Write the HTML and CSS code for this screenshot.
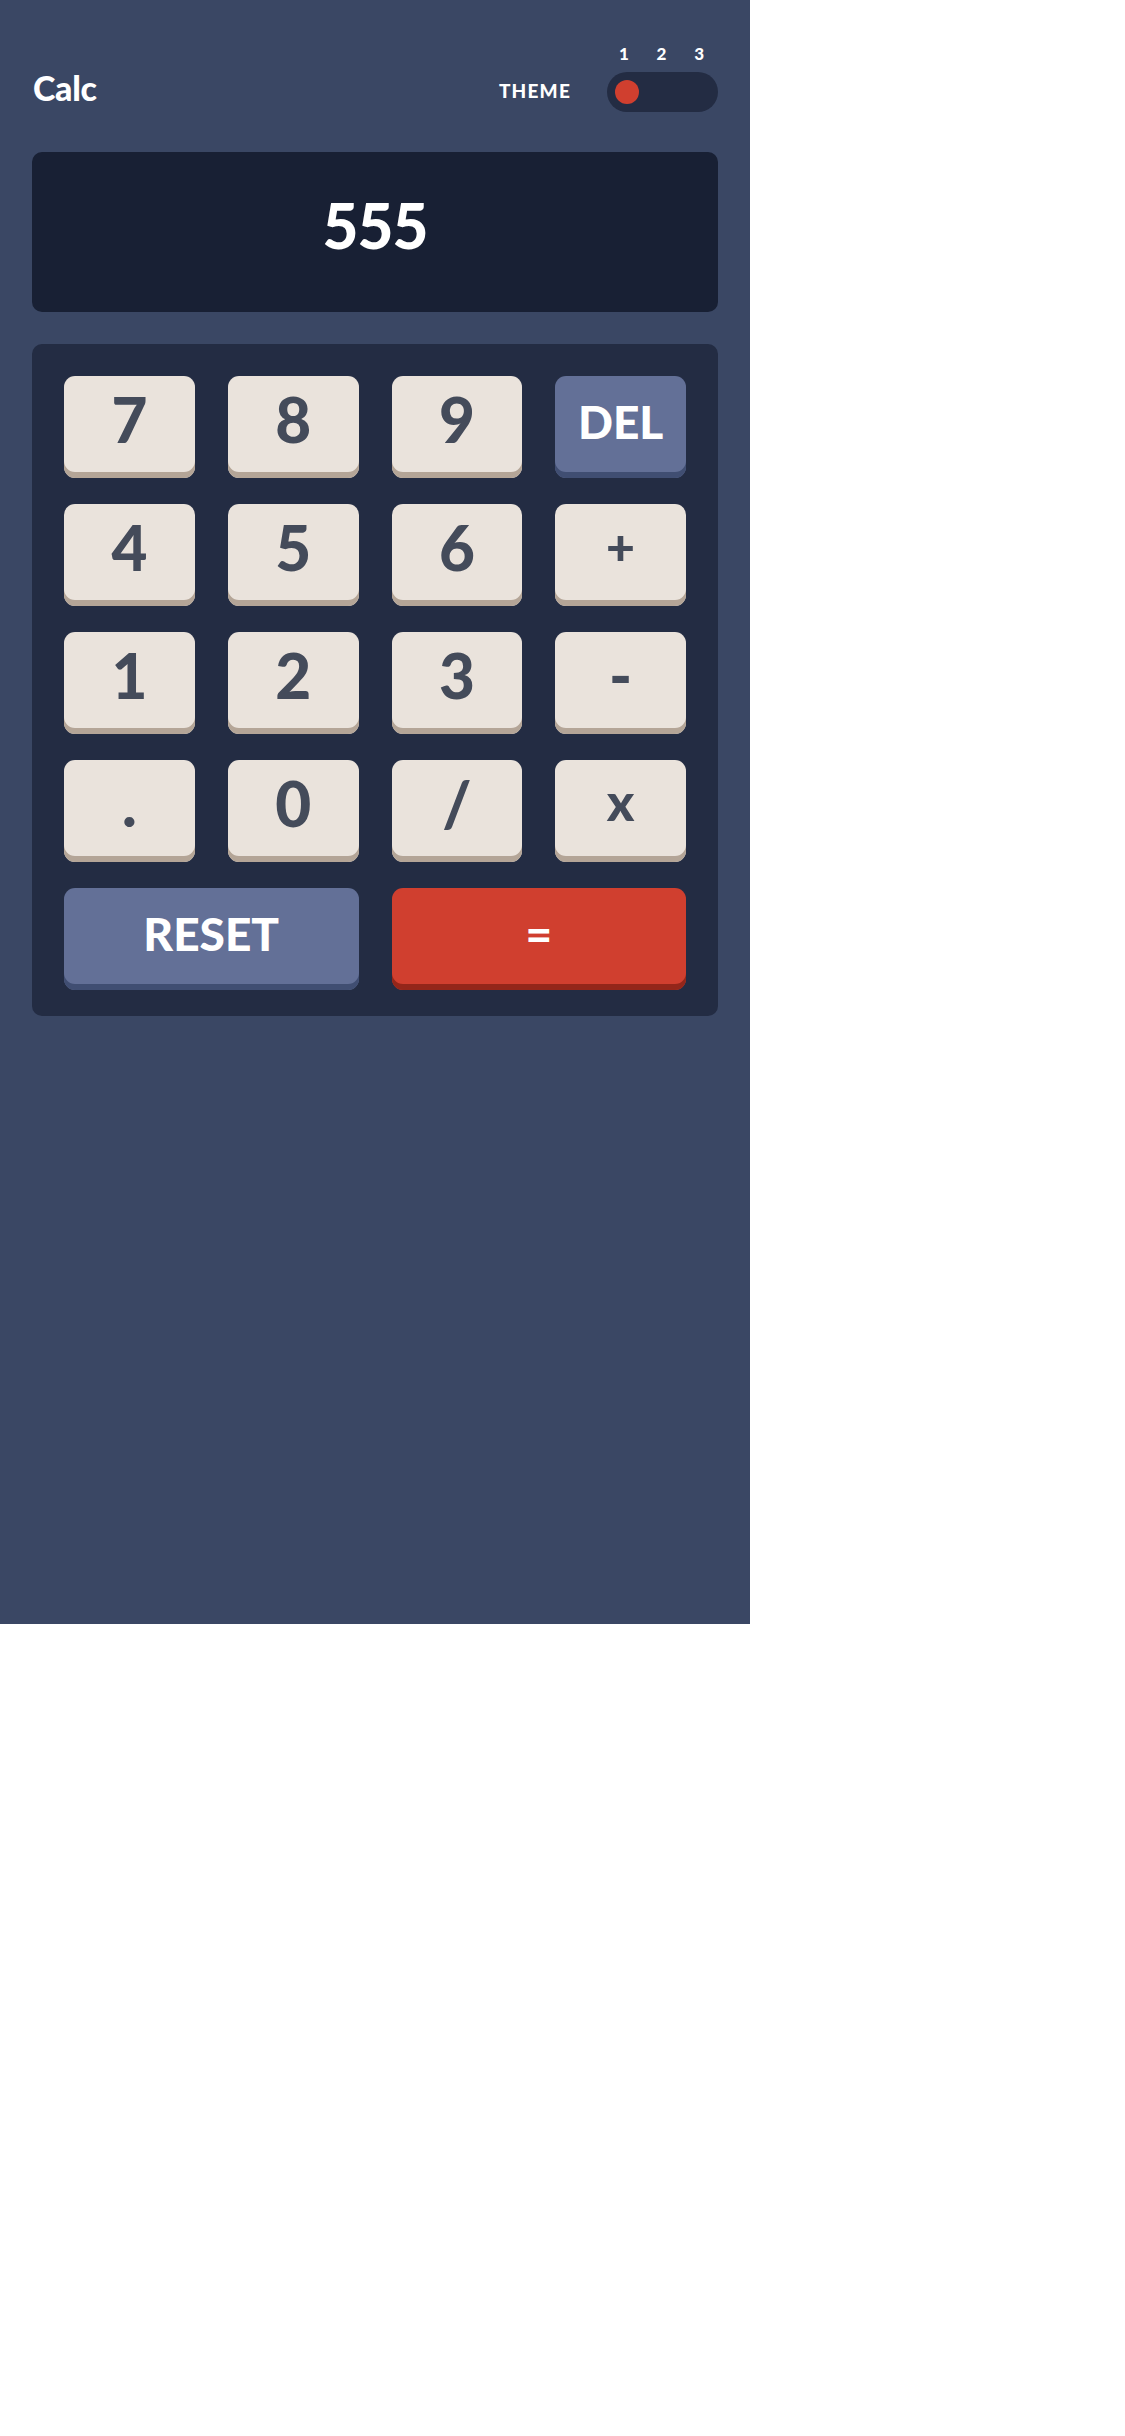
FILE: index.html
```html
<!DOCTYPE html>
<html lang="en">
<head>
<meta charset="utf-8">
<title>Calc</title>
<link rel="stylesheet" href="styles.css">
</head>
<body>
<main class="app">
  <header class="header">
    <h1 class="logo">calc</h1>
    <div class="theme">
      <span class="theme-label">THEME</span>
      <div class="switch">
        <div class="switch-nums"><span>1</span><span>2</span><span>3</span></div>
        <div class="switch-track"><span class="switch-dot"></span></div>
      </div>
    </div>
  </header>
  <section class="display"><span class="display-value">555</span></section>
  <section class="keypad">
    <button class="key">7</button>
    <button class="key">8</button>
    <button class="key">9</button>
    <button class="key key-blue key-small">DEL</button>
    <button class="key">4</button>
    <button class="key">5</button>
    <button class="key">6</button>
    <button class="key key-op">+</button>
    <button class="key">1</button>
    <button class="key">2</button>
    <button class="key">3</button>
    <button class="key">-</button>
    <button class="key">.</button>
    <button class="key">0</button>
    <button class="key">/</button>
    <button class="key key-op key-times">x</button>
    <button class="key key-blue key-small key-wide">RESET</button>
    <button class="key key-red key-small key-wide">=</button>
  </section>
</main>
</body>
</html>
```
FILE: styles.css
```css
* { box-sizing: border-box; }
html, body { margin: 0; padding: 0; background: #ffffff; }
body { font-family: Lato, "Liberation Sans", sans-serif; }

.app {
  width: 750px;
  height: 1624px;
  background: #3a4764;
  padding: 0 32px;
  color: #ffffff;
}

.header {
  display: flex;
  justify-content: space-between;
  align-items: flex-end;
  padding-top: 44px;
}

.logo {
  margin: 0 0 4px 1px;
  font-size: 34px;
  font-weight: 900;
  line-height: 40px;
  height: 40px;
  text-transform: capitalize;
  letter-spacing: -0.3px;
}

.theme {
  display: flex;
  align-items: flex-end;
  gap: 36px;
}

.theme-label {
  font-size: 19px;
  font-weight: 900;
  letter-spacing: 1.2px;
  line-height: 40px;
  height: 40px;
  margin-bottom: 1px;
}

.switch {
  display: flex;
  flex-direction: column;
  gap: 8px;
  width: 111px;
}

.switch-nums {
  display: flex;
  justify-content: space-between;
  padding: 0 14px 0 12px;
  font-size: 17px;
  font-weight: 900;
  line-height: 20px;
  height: 20px;
}

.switch-track {
  height: 40px;
  border-radius: 20px;
  background: #232c43;
  display: flex;
  align-items: center;
  padding: 0 8px;
}

.switch-dot {
  width: 24px;
  height: 24px;
  border-radius: 50%;
  background: #d03f2f;
}

.display {
  margin-top: 40px;
  height: 160px;
  border-radius: 10px;
  background: #182034;
  display: flex;
  align-items: center;
  justify-content: center;
  padding-bottom: 14px;
}

.display-value {
  font-size: 62px;
  font-weight: 900;
  line-height: 1;
  letter-spacing: -1px;
}

.keypad {
  margin-top: 32px;
  background: #232c43;
  border-radius: 10px;
  padding: 32px 32px 26px;
  display: grid;
  grid-template-columns: repeat(4, 1fr);
  column-gap: 33px;
  row-gap: 26px;
}

.key {
  height: 102px;
  border: 0;
  border-radius: 11px;
  background: #eae3dc;
  box-shadow: inset 0 -6px 0 #b4a597;
  color: #444b5a;
  font-family: Lato, "Liberation Sans", sans-serif;
  font-size: 62px;
  font-weight: 900;
  line-height: 1;
  padding: 0 0 16px;
  display: flex;
  align-items: center;
  justify-content: center;
}

.key-op {
  font-size: 50px;
  padding-bottom: 18px;
}

.key-times {
  font-size: 52px;
  padding-bottom: 20px;
}

.key-small {
  font-size: 46px;
  color: #ffffff;
  padding-bottom: 10px;
}

.key-blue {
  background: #637097;
  box-shadow: inset 0 -6px 0 #404e72;
}

.key-red {
  background: #d03f2f;
  box-shadow: inset 0 -6px 0 #93261a;
}

.key-wide {
  grid-column: span 2;
}
```
